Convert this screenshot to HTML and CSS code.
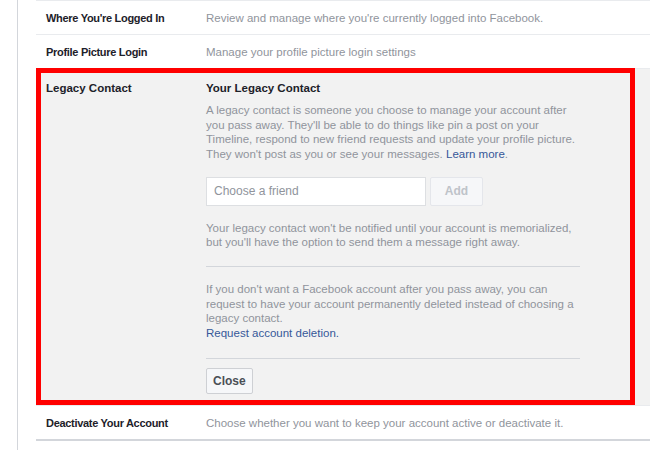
FILE: index.html
```html
<!DOCTYPE html>
<html lang="en">

<head>
    <meta charset="UTF-8">
    <meta name="viewport" content="width=device-width, initial-scale=1.0">
    <title>security settings</title>
    <link rel="stylesheet" href="styles.css">
</head>

<body>
    <div class="page">
        <div class="settings">
            <div class="row">
                <div class="label">Where You're Logged In</div>
                <div class="desc">Review and manage where you're currently logged into Facebook.</div>
            </div>

            <div class="row">
                <div class="label">Profile Picture Login</div>
                <div class="desc">Manage your profile picture login settings</div>
            </div>

            <div class="row expanded">
                <div class="label">Legacy Contact</div>
                <div class="panel">
                    <h3>Your Legacy Contact</h3>
                    <p>A legacy contact is someone you choose to manage your account after you pass away. They'll be able to do things like pin a post on your Timeline, respond to new friend requests and update your profile picture. They won't post as you or see your messages. <a href="#">Learn more</a>.</p>

                    <div class="chooser">
                        <input type="text" placeholder="Choose a friend">
                        <button class="btn add" disabled>Add</button>
                    </div>

                    <p class="note">Your legacy contact won't be notified until your account is memorialized, but you'll have the option to send them a message right away.</p>

                    <hr>

                    <p>If you don't want a Facebook account after you pass away, you can request to have your account permanently deleted instead of choosing a legacy contact.<br><a href="#">Request account deletion.</a></p>

                    <hr class="last">

                    <button class="btn">Close</button>
                </div>
                <div class="highlight"></div>
            </div>

            <div class="row bottom">
                <div class="label">Deactivate Your Account</div>
                <div class="desc">Choose whether you want to keep your account active or deactivate it.</div>
            </div>
        </div>
    </div>
</body>

</html>
```

FILE: styles.css
```css
html,
body {
    margin: 0;
    height: 100%;
    overflow: hidden;
    background: #fff;
}

body {
    font-family: "Liberation Sans", Arial, sans-serif;
    font-size: 11.5px;
    color: #1d2129;
}

.page {
    margin-left: 17px;
    height: 100%;
    border-left: 1px solid #d3d6db;
    padding-left: 18px;
}

.settings {
    width: 640px;
}

.row {
    display: grid;
    grid-template-columns: 160px 1fr;
    border-top: 1px solid #e9ebee;
    padding: 9px 0 8px 10px;
    line-height: 16px;
}

.row .label {
    font-size: 11px;
    font-weight: bold;
    letter-spacing: -0.3px;
    color: #1d2129;
}

.row .desc {
    color: #90949c;
}

.row.bottom {
    border-bottom: 2px solid #d3d6db;
}

.expanded {
    position: relative;
    background: #f2f2f2;
    padding-top: 11px;
    padding-bottom: 11px;
}

.expanded .label {
    font-size: 11.5px;
    letter-spacing: 0;
}

.panel {
    width: 374px;
    color: #90949c;
}

.panel h3 {
    margin: 0 0 7px;
    font-size: 11.5px;
    line-height: 16px;
    color: #1d2129;
}

.panel p {
    margin: 0;
    line-height: 14.67px;
}

.panel a {
    color: #365899;
    text-decoration: none;
}

.chooser {
    display: flex;
    gap: 4px;
    margin: 15px 0 15px;
}

.chooser input {
    box-sizing: border-box;
    width: 220px;
    height: 29px;
    margin: 0;
    padding: 0 7px;
    border: 1px solid #dddfe2;
    background: #fff;
    font-family: inherit;
    font-size: 12px;
    outline: none;
}

.chooser input::placeholder {
    color: #90949c;
}

.btn {
    box-sizing: border-box;
    height: 26px;
    padding: 0 6px;
    border: 1px solid #ced0d4;
    border-radius: 2px;
    background: #f6f7f9;
    font-family: inherit;
    font-size: 12px;
    font-weight: bold;
    color: #4b4f56;
}

.btn.add {
    width: 53px;
    height: 29px;
    border-color: #e4e6eb;
    color: #bec3c9;
}

.panel hr {
    margin: 16px 0 15px;
    border: 0;
    border-top: 1px solid #d3d6db;
}

.panel hr.last {
    margin: 17px 0 9px;
}

.highlight {
    position: absolute;
    left: 0;
    top: -1px;
    bottom: 0;
    width: 599px;
    box-sizing: border-box;
    border: 5px solid #ff0000;
    pointer-events: none;
}
```
